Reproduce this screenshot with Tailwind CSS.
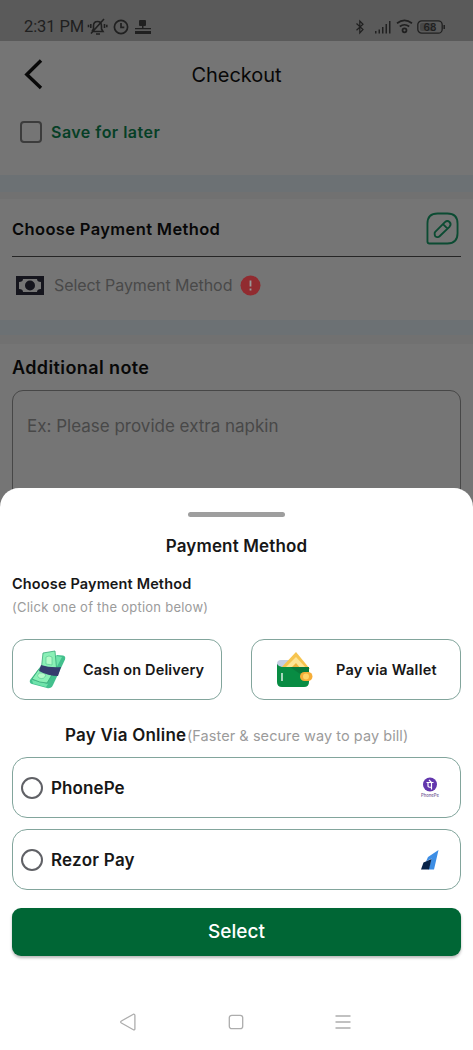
<!DOCTYPE html>
<html lang="en">
<head>
<meta charset="utf-8">
<title>Checkout</title>
<script src="https://cdn.jsdelivr.net/npm/@tailwindcss/browser@4"></script>
</head>
<body class="bg-white">
<div class="relative w-[473px] h-[1050px] overflow-hidden bg-[#757575] font-[Inter,sans-serif] whitespace-nowrap text-[#080808]">
  <!-- Status bar -->
  <header class="h-[41px] bg-[#5a5a5a] flex items-center pt-[12px] pl-[24px] pr-[27px] text-[#202020]">
    <span class="w-[61px] font-[Roboto,sans-serif] text-[16.500px] leading-5 tracking-[-0.1px]">2:31 PM</span>
    <svg class="ml-[2px]" width="21" height="18" viewBox="0 0 21 18" fill="none" stroke="currentColor" stroke-width="1.6"><path d="M5 13.5h11l-1.5-2.500V8c0-3-1.500-4.500-4-4.500S6.500 5 6.500 8v3L5 13.500M9 16h4M17 1L4 15.500M3.800 6v4M1.500 6.800v2.500M17.500 6v4M19.800 6.800v2.500"/></svg>
    <svg class="ml-[5px]" width="16" height="16" viewBox="0 0 16 16" fill="none" stroke="currentColor" stroke-width="1.7"><circle cx="8" cy="8" r="6.600"/><path d="M8 4v4.300h3.300"/></svg>
    <svg class="ml-[5px]" width="18" height="16" viewBox="0 0 18 16" fill="currentColor"><path d="M6 1h5q1 0 1 1v4q0 1-1 1H6Q5 7 5 6V2q0-1 1-1zM8 7h1.500v2H8zM1 9h16v1.200H1zM1 12h16v3H1z"/></svg>
    <span class="flex-1"></span>
    <svg width="10" height="16" viewBox="0 0 10 16" fill="none" stroke="currentColor" stroke-width="1.200"><path d="M1.500 4.500l6.500 6-3.200 3.500V2L8 5.300l-6.500 6"/></svg>
    <svg class="ml-[9px]" width="18" height="14" viewBox="0 0 18 14" fill="currentColor"><path d="M1 11h1.500v2.500H1zM4.500 9.500H6v4H4.500zM8 7h1.500v6.500H8zM11.500 4H13v9.500h-1.500zM15 1h1.500v12.500H15z"/></svg>
    <svg class="ml-[4px]" width="17" height="15" viewBox="0 0 17 15" fill="none" stroke="currentColor" stroke-width="1.700"><path d="M1 4.200q7.500-5.500 15 0M3.800 7.500q4.700-3.500 9.400 0"/><circle cx="8.500" cy="11.300" r="2"/></svg>
    <svg class="ml-[4px]" width="29" height="14" viewBox="0 0 29 14" fill="none" stroke="currentColor"><rect x=".8" y=".8" width="24.400" height="12.400" rx="4" stroke-width="1.300"/><path d="M27.200 5v4" stroke-width="1.500"/><rect x="3" y="3" width="14" height="8" rx="2" fill="#484848" stroke="none"/><text x="13" y="10.700" text-anchor="middle" font-family="Inter" font-size="10" font-weight="600" fill="currentColor" stroke="none">68</text></svg>
  </header>

  <!-- App bar -->
  <div class="h-[67px] grid grid-cols-[1fr_auto_1fr] items-center">
    <svg class="ml-[24px] -mt-[2px]" width="20" height="32" viewBox="0 0 20 32" fill="none" stroke="currentColor" stroke-width="3.400"><path d="M17 2.500L2.800 16.500 17 30"/></svg>
    <h1 class="w-[90px] text-[20px] leading-6 font-normal tracking-[-0.05px]">Checkout</h1>
  </div>
  <div class="h-[67px] pl-[20px] flex items-start pt-[12px]">
    <span class="mt-px size-[22px] rounded-[4px] border-2 border-[#3c3c3c]"></span>
    <span class="ml-[9px] mt-px text-[16px] leading-[22px] font-semibold tracking-[0.48px] text-[#063f26]">Save for later</span>
  </div>
  <div class="h-[17px] bg-[#6c7174]"></div>
  <div class="h-[7px] bg-[#717171]"></div>

  <!-- Selected payment method -->
  <section class="h-[121px] px-[12px]">
    <div class="h-[58px] flex items-center justify-between border-b-[1.500px] border-[#252525] pt-[2px]">
      <h2 class="pt-px text-[16.500px] leading-6 font-semibold tracking-[0.36px]">Choose Payment Method</h2>
      <svg class="mr-[2px]" width="33" height="33" viewBox="0 0 34 34" fill="none" stroke="#0b4b32" stroke-width="1.900"><path d="M1.500 12Q1.500 1.500 12 1.500h10q10.500 0 10.500 10.500v10q0 10.500-10.500 10.500H3.500q-2 0-2-2z"/><path d="M9.500 20.500L19.500 10.500q2.500-2.300 4.700-.2t.2 4.700L14 25q-1 1-2.200.8l-1.300-.2q-1.200-.2-1.300-1.400l-.3-1.500q-.2-1.200.6-2.200zM17.500 12.500l4.700 4.700" stroke-linejoin="round"/></svg>
    </div>
    <div class="flex items-center h-[56px] pl-[4px] text-[#494949]">
      <svg width="28" height="19" viewBox="0 0 28 19"><path fill="#15151d" d="M0 0h28v19H0z"/><path fill="#757575" d="M7 3h14q0 3 4 3v7q-4 0-4 3H7q0-3-4-3V6q4 0 4-3z"/><circle cx="14" cy="9.500" r="5" fill="#15151d"/></svg>
      <span class="w-[178px] ml-[10px] text-[16px] leading-6 tracking-[-0.08px]">Select Payment Method</span>
      <svg class="ml-[8px]" width="21" height="21" viewBox="0 0 21 21"><circle cx="10.500" cy="10.500" r="10" fill="#912b30"/><path d="M10.500 5.500v6M10.500 13.500v2" stroke="#999" stroke-width="1.800"/></svg>
    </div>
  </section>
  <div class="h-[15px] bg-[#6c7174]"></div>
  <div class="h-[9px] bg-[#717171]"></div>

  <!-- Note -->
  <section class="px-[12px] pt-[12px]">
    <h2 class="text-[18px] leading-6 font-semibold tracking-[0.4px]">Additional note</h2>
    <div class="mt-[10px] h-[140px] rounded-[11px] border border-[#474747] pl-[14px] pt-[23px] text-[17px] leading-6 text-[#484848]">Ex: Please provide extra napkin</div>
  </section>

  <!-- Bottom sheet -->
  <main class="absolute inset-x-0 bottom-0 h-[562px] bg-white rounded-t-[19px] px-[12px] text-[#171717] flex flex-col">
    <div class="mt-[24px] w-[97px] h-[5px] rounded-full bg-[#9e9e9e] self-center"></div>
    <h2 class="mt-[17px] self-center text-[17px] leading-6 font-semibold tracking-[0.15px]">Payment Method</h2>
    <h3 class="mt-[16px] text-[14.500px] leading-5 font-semibold tracking-[0.14px]">Choose Payment Method</h3>
    <p class="mt-[3px] text-[13px] leading-5 tracking-[0.24px] text-[#9b9b9b]">(Click one of the option below)</p>
    <div class="mt-[22px] grid grid-cols-2 gap-x-[29px] h-[61px] text-[14.500px] font-semibold tracking-[0.15px]">
      <div class="border border-[#82a59c] rounded-[13px] flex items-center">
        <svg class="ml-[16px]" width="38" height="40" viewBox="0 0 38 40"><path fill="#43c08d" d="M28 5l6 .5q3 .5 2 4L24 35q-2 4-6 3L3 34q-3-1-2-4l10-13z"/><path fill="#6fe3ab" d="M27 6l6 1-10 19-6-2zM3 30l16 4-2 3-13-3.500z"/><path fill="#8af0b6" stroke="#37a879" stroke-width=".8" d="M14 3q6-1 12-2l1.500 17-15-1zM10 19l14 4-6 10q-7 0-15-4z"/><path fill="#b5fac9" stroke="#4fc18e" stroke-width=".6" d="M17 7q3-2 6 0v8l-6-1zM10 23q5-1 7 2-2 5-7 3-3-2 0-5z"/><path fill="#353c6e" d="M12 15q9 3 20 2l-3 9q-10 0-19-5z"/></svg>
        <span class="ml-[16px]">Cash on Delivery</span>
      </div>
      <div class="border border-[#82a59c] rounded-[13px] flex items-center">
        <svg class="ml-[24px]" width="38" height="38" viewBox="0 0 38 38"><path fill="#c4cce2" d="M1 13q0-4 4-4h10l-5 9H1z"/><path fill="#f6c44f" d="M4 18L20 1l14 17z"/><path fill="#ffe494" d="M8 18L20 6l11 12z"/><path fill="#edb43e" d="M14 18l6-6 5 6z"/><path fill="#088c43" d="M1 13q2 3 5 3h27v15q0 5-5 5H6q-5 0-5-5z"/><path fill="#087a3a" d="M14 16h19v13z"/><path stroke="#fff" stroke-width="1.300" d="M6 22v8"/><rect x="24" y="21" width="12.500" height="9" rx="4.500" fill="#f6ad37"/><circle cx="30" cy="25.500" r="3" fill="#ffd568"/></svg>
        <span class="ml-[22px] tracking-[0.25px]">Pay via Wallet</span>
      </div>
    </div>
    <div class="mt-[23px] h-6 flex items-center self-center">
      <h3 class="w-[122px] text-[17px] leading-6 font-semibold tracking-[0.22px]">Pay Via Online</h3>
      <span class="w-[221px] pt-px text-[14.500px] leading-6 tracking-[0.06px] text-[#9b9b9b]">(Faster &amp; secure way to pay bill)</span>
    </div>
    <div class="mt-[10px] flex flex-col gap-[11px] text-[17px] font-semibold">
      <div class="h-[61px] border border-[#82a59c] rounded-[15px] flex items-center pl-[8px] pr-[20px]">
        <span class="size-[22px] rounded-full border-2 border-[#606166]"></span>
        <span class="ml-[8px] pt-[2px] flex-1 tracking-[0.1px]">PhonePe</span>
        <svg width="20" height="22" viewBox="0 0 20 22"><circle cx="10" cy="7.500" r="7" fill="#6236ad"/><path d="M6.500 5.500h7M8 6v3q0 1.500 3.500 1.200M11.500 5.500V12.500M9 3l2.500 2.500" fill="none" stroke="#fff" stroke-width="1.200"/><text x="10" y="19.500" text-anchor="middle" font-family="Inter" font-size="4.200" font-weight="500" fill="#6f5792">PhonePe</text></svg>
      </div>
      <div class="h-[61px] border border-[#82a59c] rounded-[15px] flex items-center pl-[8px] pr-[20px]">
        <span class="size-[22px] rounded-full border-2 border-[#606166]"></span>
        <span class="ml-[8px] pt-[2px] flex-1 tracking-[0.25px]">Rezor Pay</span>
        <svg width="19" height="20" viewBox="0 0 19 20"><path fill="#3d8ee5" d="M17.500 0L7 7l-2 4.500 5.500-3L7.500 19.500h5.500z"/><path fill="#082348" d="M2.500 12.500L10.500 9 8 19.500H0z"/></svg>
      </div>
    </div>
    <button class="mt-[18px] h-[48px] rounded-[9px] bg-[#006635] pt-px text-white text-[19px] font-medium shadow-[0_2px_3px_rgba(0,0,0,0.28)]">Select</button>
    <!-- System navigation -->
    <nav class="mt-[57px] ml-[107px] flex items-center gap-[91px] text-[#adadad]">
      <svg width="18" height="18" viewBox="0 0 18 18" fill="none" stroke="currentColor" stroke-width="1.300" stroke-linejoin="round"><path d="M15 1.200L3 8q-1.500 1 0 2l12 6.800q1.500.5 1.500-1V2.500q0-1.500-1.500-1.300z" transform="translate(-.6 0)"/></svg>
      <svg width="16" height="16" viewBox="0 0 16 16" fill="none" stroke="currentColor" stroke-width="1.300"><rect x="1.300" y="1.300" width="13.400" height="13.400" rx="2.500"/></svg>
      <svg width="16" height="16" viewBox="0 0 16 16" fill="none" stroke="currentColor" stroke-width="1.300"><path d="M.5 2h15M.5 8h15M.5 14h15"/></svg>
    </nav>
  </main>
</div>
</body>
</html>
